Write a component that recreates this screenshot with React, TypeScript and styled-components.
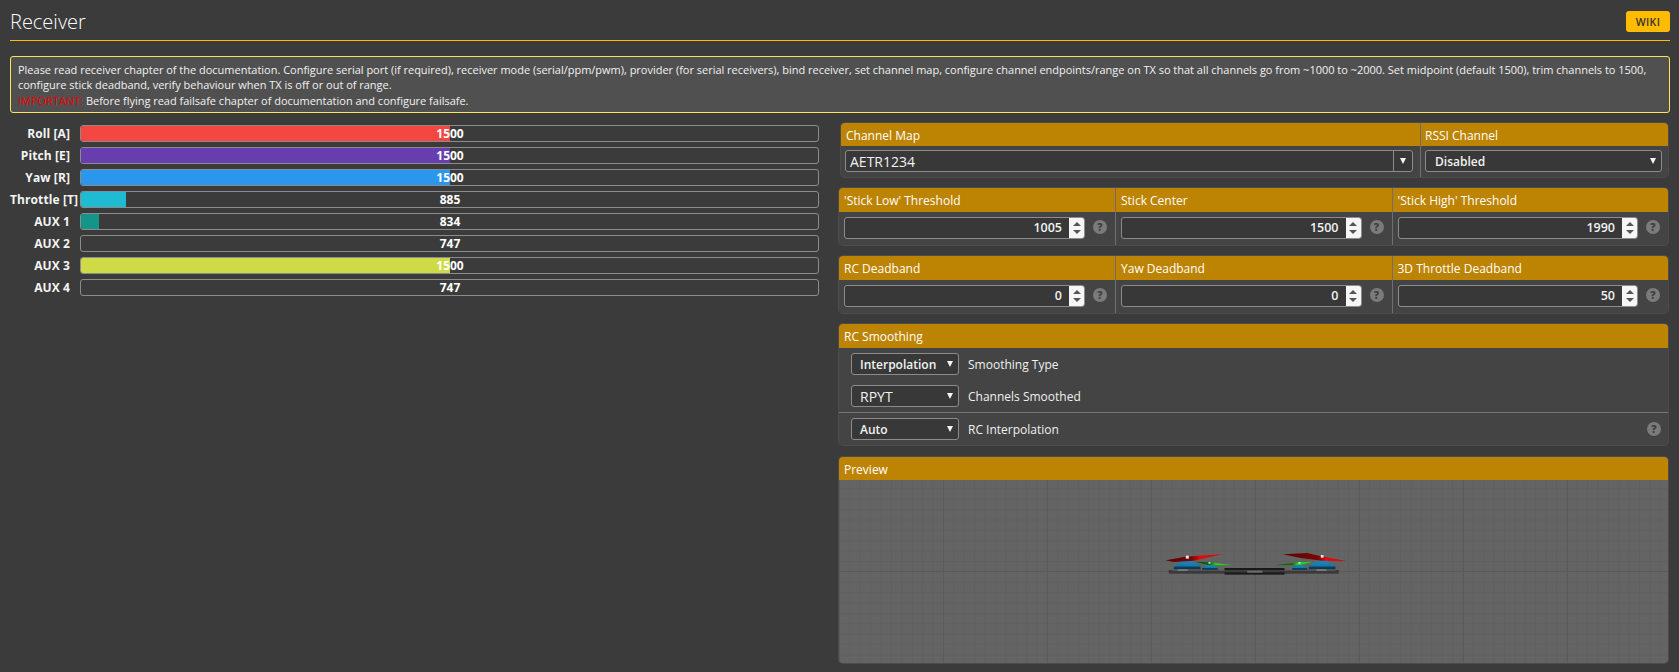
import React from 'react';
import styled, { createGlobalStyle } from 'styled-components';

const Global = createGlobalStyle`
  html, body { margin: 0; padding: 0; background: #3a3b3a; }
  body { font-family: "Open Sans", "Liberation Sans", sans-serif; color: #fff; width: 1679px; height: 672px; overflow: hidden; }
`;

const Page = styled.div`
  padding: 0 9px 0 10px;
`;
const TitleBar = styled.div`
  height: 40px;
  border-bottom: 1px solid #ffbb00;
  display: flex;
  justify-content: space-between;
  align-items: flex-start;
`;
const Title = styled.h1`
  margin: 8px 0 0;
  font-size: 20px;
  line-height: 27px;
  font-weight: 300;
  color: #fff;
`;
const Wiki = styled.div`
  margin-top: 11px;
  width: 44px;
  height: 21px;
  background: #ffbb00;
  border-radius: 3px;
  color: #333;
  font-size: 10.5px;
  font-weight: 600;
  display: flex;
  align-items: center;
  justify-content: center;
  letter-spacing: 0.4px;
`;
const Note = styled.div`
  margin-top: 15px;
  height: 57px;
  box-sizing: border-box;
  border: 1px solid #ffe45a;
  border-radius: 3px;
  background: #505050;
  padding: 5px 7px;
  font-size: 11px;
  line-height: 15.3px;
  letter-spacing: -0.012px;
  color: #f2f2f2;
`;
const Important = styled.span`
  color: #f00000;
  font-weight: 400;
`;
const Columns = styled.div`
  display: grid;
  grid-template-columns: 810px 830px;
  column-gap: 19px;
  margin-top: 10px;
`;
const Bars = styled.div`
  display: flex;
  flex-direction: column;
  gap: 5px;
  padding-top: 2px;
`;
const BarRow = styled.div`
  display: flex;
  align-items: center;
  height: 17px;
`;
const BarLabel = styled.div`
  width: 60px;
  margin-right: 10px;
  padding-bottom: 1px;
  flex: none;
  text-align: right;
  font-size: 12px;
  font-weight: 700;
  letter-spacing: 0.1px;
  white-space: nowrap;
  color: #f4f4f4;
`;
const Track = styled.div`
  position: relative;
  width: 739px;
  height: 17px;
  box-sizing: border-box;
  border: 1px solid #8c8c8c;
  border-radius: 3px;
`;
const Fill = styled.div<{ $color: string }>`
  height: 100%;
  background: ${p => p.$color};
  border-radius: 2px 0 0 2px;
`;
const BarValue = styled.div`
  position: absolute;
  inset: 0;
  padding-left: 1px;
  display: flex;
  align-items: center;
  justify-content: center;
  font-size: 12px;
  font-weight: 700;
  color: #fff;
`;
const Right = styled.div`
  display: flex;
  flex-direction: column;
  gap: 11px;
`;
const Panel = styled.section<{ $inset?: boolean }>`
  margin: ${p => (p.$inset ? '0 1px 0 2px' : '0 1px 0 0')};
  background: #434443;
  border-radius: 4px;
  box-shadow: 0 0 0 1px #4a4b4a;
  overflow: hidden;
`;
const PreviewPanel = styled(Panel)`
  margin-top: 1px;
`;
const MapGrid = styled.div`
  display: grid;
  grid-template-columns: 579px 248px;
`;
const TripleGrid = styled.div`
  display: grid;
  grid-template-columns: 276px 276.5px 276.5px;
`;
const Column = styled.div`
  & + & { border-left: 1px solid #6e6f6e; }
`;
const Head = styled.div<{ $h?: number; $pad?: number }>`
  height: ${p => p.$h ?? 24}px;
  background: #bd8303;
  color: #fff;
  font-size: 12px;
  line-height: ${p => (p.$h ?? 24) + 2}px;
  padding-left: ${p => p.$pad ?? 5}px;
`;
const MapCell = styled.div<{ $left: number; $right: number }>`
  height: 31px;
  box-sizing: border-box;
  padding: 4px ${p => p.$right}px 0 ${p => p.$left}px;
`;
const Drop = styled.div<{ $w?: number }>`
  box-sizing: border-box;
  height: 22px;
  width: ${p => (p.$w ? `${p.$w}px` : '100%')};
  background: #373837;
  border: 1px solid #8c8c8c;
  border-radius: 3px;
  display: flex;
  align-items: center;
  position: relative;
`;
const DropText = styled.span<{ $big?: boolean; $pad: number }>`
  flex: 1;
  padding-left: ${p => p.$pad}px;
  font-family: "Open Sans", sans-serif;
  font-size: ${p => (p.$big ? '14px' : '12px')};
  font-weight: ${p => (p.$big ? 400 : 600)};
  color: #f2f2f2;
`;
const Arrow = styled.i`
  display: block;
  width: 0;
  height: 0;
  border-left: 3.5px solid transparent;
  border-right: 3.5px solid transparent;
  border-top: 6px solid #f4f4f4;
`;
const ArrowBox = styled.span<{ $line?: boolean }>`
  width: ${p => (p.$line ? 18 : 17)}px;
  align-self: stretch;
  display: flex;
  align-items: center;
  justify-content: center;
  border-left: ${p => (p.$line ? '1px solid #8c8c8c' : 'none')};
`;
const NumCell = styled.div`
  height: 33px;
  box-sizing: border-box;
  padding: 5px 8px 0 5px;
  display: flex;
  align-items: flex-start;
`;
const NumInput = styled.div`
  flex: 1;
  height: 22px;
  box-sizing: border-box;
  background: #373837;
  border: 1px solid #8c8c8c;
  border-radius: 3px;
  display: flex;
  overflow: hidden;
`;
const NumText = styled.span`
  flex: 1;
  text-align: right;
  padding-right: 7px;
  font-size: 12.5px;
  font-weight: 600;
  line-height: 20px;
  color: #f2f2f2;
`;
const Spin = styled.span`
  width: 15px;
  background: #f6f6f6;
  display: flex;
  flex-direction: column;
  align-items: center;
  justify-content: center;
  gap: 4px;
`;
const SpinUp = styled.i`
  width: 0;
  height: 0;
  border-left: 4px solid transparent;
  border-right: 4px solid transparent;
  border-bottom: 4px solid #555;
`;
const SpinDown = styled.i`
  width: 0;
  height: 0;
  border-left: 4px solid transparent;
  border-right: 4px solid transparent;
  border-top: 4px solid #555;
`;
const Help = styled.span<{ $top?: number }>`
  flex: none;
  width: 14px;
  height: 14px;
  margin: ${p => p.$top ?? 3}px 0 0 8px;
  border-radius: 50%;
  background: #7b7b7b;
  color: #3f3f3f;
  font-size: 10.5px;
  font-weight: 800;
  line-height: 14px;
  text-align: center;
`;
const SmoothRow = styled.div<{ $h: number; $top: number; $line?: boolean }>`
  height: ${p => p.$h}px;
  box-sizing: border-box;
  padding: ${p => p.$top}px 7px 0 12px;
  display: flex;
  align-items: flex-start;
  border-top: ${p => (p.$line ? '1px solid #777' : 'none')};
`;
const RowLabel = styled.span`
  flex: 1;
  margin-left: 9px;
  font-size: 12px;
  line-height: 24px;
  color: #f0f0f0;
`;
const Viewport = styled.div`
  height: 183px;
  display: flex;
  align-items: center;
  justify-content: center;
  background-color: #646464;
  background-image:
    linear-gradient(to right, #5a5a5a 1px, transparent 1px),
    linear-gradient(to bottom, #5a5a5a 1px, transparent 1px),
    linear-gradient(to right, #606060 1px, transparent 1px),
    linear-gradient(to bottom, #606060 1px, transparent 1px);
  background-size: 104px 104px, 104px 104px, 10.4px 10.4px, 10.4px 10.4px;
  background-position: 0 91px, 0 91px, 0 8.3px, 0 8.3px;
`;

const channels = [
  { name: 'Roll [A]', value: 1500, color: '#f44741' },
  { name: 'Pitch [E]', value: 1500, color: '#673db0' },
  { name: 'Yaw [R]', value: 1500, color: '#2a96ee' },
  { name: 'Throttle [T]', value: 885, color: '#1fbbd3' },
  { name: 'AUX 1', value: 834, color: '#14958a' },
  { name: 'AUX 2', value: 747, color: 'transparent' },
  { name: 'AUX 3', value: 1500, color: '#cfdb46' },
  { name: 'AUX 4', value: 747, color: 'transparent' },
];
const pct = (v: number) => Math.max(0, ((v - 800) / 1400) * 100);

const Quad = () => (
  <svg width="240" height="60" viewBox="10.5 36 720 180">
    <defs>
      <linearGradient id="blue" x1="0" y1="0" x2="0" y2="1">
        <stop offset="0" stopColor="#1f86bd" />
        <stop offset="0.6" stopColor="#1578aa" />
        <stop offset="0.75" stopColor="#0d3f5c" />
        <stop offset="1" stopColor="#0c3347" />
      </linearGradient>
      <linearGradient id="redL" x1="0" y1="0" x2="1" y2="0">
        <stop offset="0" stopColor="#560404" />
        <stop offset="0.45" stopColor="#7a0505" />
        <stop offset="0.6" stopColor="#e80808" />
        <stop offset="1" stopColor="#d80808" />
      </linearGradient>
      <linearGradient id="redR" x1="0" y1="0" x2="1" y2="0">
        <stop offset="0" stopColor="#5a0404" />
        <stop offset="0.55" stopColor="#7a0505" />
        <stop offset="0.68" stopColor="#e80808" />
        <stop offset="1" stopColor="#d80808" />
      </linearGradient>
      <linearGradient id="greenL" x1="0" y1="0" x2="1" y2="0">
        <stop offset="0" stopColor="#064a06" />
        <stop offset="0.4" stopColor="#0a700a" />
        <stop offset="0.55" stopColor="#14e014" />
        <stop offset="1" stopColor="#14d814" />
      </linearGradient>
      <linearGradient id="greenR" x1="1" y1="0" x2="0" y2="0">
        <stop offset="0" stopColor="#14e014" />
        <stop offset="0.4" stopColor="#14d814" />
        <stop offset="0.55" stopColor="#0a700a" />
        <stop offset="1" stopColor="#064a06" />
      </linearGradient>
    </defs>
    <rect x="115" y="120" width="510" height="11" fill="#3a3a3a" />
    <rect x="125" y="119" width="490" height="3" fill="#5e5e5e" />
    <rect x="142" y="117" width="30" height="5" fill="#8c8c8c" />
    <rect x="558" y="117" width="30" height="5" fill="#8c8c8c" />
    <rect x="282" y="114" width="180" height="7" fill="#191919" />
    <rect x="282" y="127" width="180" height="7" fill="#1c1c1c" />
    <rect x="350" y="122" width="46" height="6" fill="#6e6e6e" />
    <path d="M130 108 L158 92 H184 L210 108 V118 H130Z" fill="url(#blue)" />
    <path d="M215 113 L230 104 H246 L262 113 V119 H215Z" fill="url(#blue)" />
    <path d="M535 108 L562 92 H588 L615 108 V118 H535Z" fill="url(#blue)" />
    <path d="M485 113 L500 104 H516 L530 113 V119 H485Z" fill="url(#blue)" />
    <path d="M195 95 L238 97 L306 106 L232 105Z" fill="url(#greenL)" />
    <path d="M434 106 L505 97 L546 95 L510 105Z" fill="url(#greenR)" />
    <path d="M105 91 L165 80 L278 72 L190 92 L130 96Z" fill="url(#redL)" />
    <path d="M457 73 L530 69 L572 79 L648 93 L575 92 L510 84Z" fill="url(#redR)" />
    <rect x="166" y="77" width="9" height="9" fill="#dfe8ee" />
    <rect x="571" y="75" width="8" height="8" fill="#dfe8ee" />
    <rect x="234" y="96" width="6" height="5" fill="#cfe2ee" />
    <rect x="504" y="96" width="6" height="5" fill="#cfe2ee" />
  </svg>
);

const Num = ({ v }: { v: number }) => (
  <NumCell>
    <NumInput>
      <NumText>{v}</NumText>
      <Spin><SpinUp /><SpinDown /></Spin>
    </NumInput>
    <Help>?</Help>
  </NumCell>
);

export default function App() {
  return (
    <Page>
      <Global />
      <TitleBar>
        <Title>Receiver</Title>
        <Wiki>WIKI</Wiki>
      </TitleBar>
      <Note>
        Please read receiver chapter of the documentation. Configure serial port (if required), receiver mode (serial/ppm/pwm), provider (for serial receivers), bind receiver, set channel map, configure channel endpoints/range on TX so that all channels go from ~1000 to ~2000. Set midpoint (default 1500), trim channels to 1500, configure stick deadband, verify behaviour when TX is off or out of range.
        <br />
        <Important>IMPORTANT:</Important> Before flying read failsafe chapter of documentation and configure failsafe.
      </Note>
      <Columns>
        <Bars>
          {channels.map(c => (
            <BarRow key={c.name}>
              <BarLabel>{c.name}</BarLabel>
              <Track>
                <Fill $color={c.color} style={{ width: `${pct(c.value)}%` }} />
                <BarValue>{c.value}</BarValue>
              </Track>
            </BarRow>
          ))}
        </Bars>
        <Right>
          <Panel $inset>
            <MapGrid>
              <Column>
                <Head $h={23} $pad={5}>Channel Map</Head>
                <MapCell $left={4} $right={7}>
                  <Drop>
                    <DropText $big $pad={4}>AETR1234</DropText>
                    <ArrowBox $line><Arrow /></ArrowBox>
                  </Drop>
                </MapCell>
              </Column>
              <Column>
                <Head $h={23} $pad={4}>RSSI Channel</Head>
                <MapCell $left={4} $right={6}>
                  <Drop>
                    <DropText $pad={9}>Disabled</DropText>
                    <ArrowBox><Arrow /></ArrowBox>
                  </Drop>
                </MapCell>
              </Column>
            </MapGrid>
          </Panel>
          <Panel>
            <TripleGrid>
              <Column><Head>'Stick Low' Threshold</Head><Num v={1005} /></Column>
              <Column><Head>Stick Center</Head><Num v={1500} /></Column>
              <Column><Head>'Stick High' Threshold</Head><Num v={1990} /></Column>
            </TripleGrid>
          </Panel>
          <Panel>
            <TripleGrid>
              <Column><Head>RC Deadband</Head><Num v={0} /></Column>
              <Column><Head>Yaw Deadband</Head><Num v={0} /></Column>
              <Column><Head>3D Throttle Deadband</Head><Num v={50} /></Column>
            </TripleGrid>
          </Panel>
          <Panel>
            <Head>RC Smoothing</Head>
            <SmoothRow $h={32} $top={5}>
              <Drop $w={108}>
                <DropText $pad={8}>Interpolation</DropText>
                <ArrowBox><Arrow /></ArrowBox>
              </Drop>
              <RowLabel>Smoothing Type</RowLabel>
            </SmoothRow>
            <SmoothRow $h={32} $top={5}>
              <Drop $w={108}>
                <DropText $big $pad={8}>RPYT</DropText>
                <ArrowBox><Arrow /></ArrowBox>
              </Drop>
              <RowLabel>Channels Smoothed</RowLabel>
            </SmoothRow>
            <SmoothRow $h={33} $top={5} $line>
              <Drop $w={108}>
                <DropText $pad={8}>Auto</DropText>
                <ArrowBox><Arrow /></ArrowBox>
              </Drop>
              <RowLabel>RC Interpolation</RowLabel>
              <Help $top={4}>?</Help>
            </SmoothRow>
          </Panel>
          <PreviewPanel>
            <Head $h={23}>Preview</Head>
            <Viewport><Quad /></Viewport>
          </PreviewPanel>
        </Right>
      </Columns>
    </Page>
  );
}
